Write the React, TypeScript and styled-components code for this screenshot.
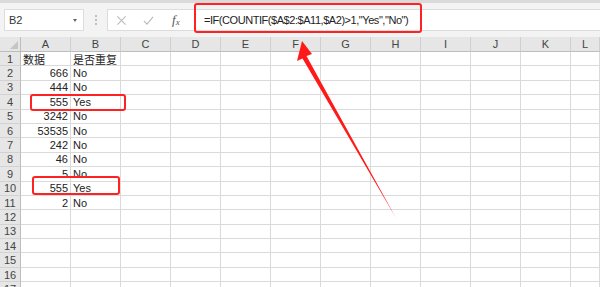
import styled, { createGlobalStyle } from 'styled-components';

const GlobalStyle = createGlobalStyle`
  html, body {
    margin: 0;
    padding: 0;
    background: #ffffff;
    overflow: hidden;
  }
  body {
    font-family: 'Liberation Sans', 'Noto Sans CJK SC', sans-serif;
  }
`;

const COLS = ['A', 'B', 'C', 'D', 'E', 'F', 'G', 'H', 'I', 'J', 'K', 'L'];
const ROW_COUNT = 17;

const data: { value: string; dup: string }[] = [
  { value: '数据', dup: '是否重复' },
  { value: '666', dup: 'No' },
  { value: '444', dup: 'No' },
  { value: '555', dup: 'Yes' },
  { value: '3242', dup: 'No' },
  { value: '53535', dup: 'No' },
  { value: '242', dup: 'No' },
  { value: '46', dup: 'No' },
  { value: '5', dup: 'No' },
  { value: '555', dup: 'Yes' },
  { value: '2', dup: 'No' },
];

export default function App() {
  return (
    <Screen>
      <GlobalStyle />
      <TopStrip />
      <FormulaBar>
        <NameBox>
          <span>B2</span>
          <Caret />
        </NameBox>
        <Grip>
          <i />
          <i />
          <i />
        </Grip>
        <FormulaInput>
          <Tools>
            <ToolIcon viewBox="0 0 12 12">
              <path d="M1.5 1.5 L10.5 10.5 M10.5 1.5 L1.5 10.5" stroke="#b8b8b8" strokeWidth="1.1" fill="none" />
            </ToolIcon>
            <ToolIcon viewBox="0 0 12 12">
              <path d="M1 6.5 L4.3 10 L11 2" stroke="#b8b8b8" strokeWidth="1.2" fill="none" />
            </ToolIcon>
            <Fx>
              f<sub>x</sub>
            </Fx>
          </Tools>
          <FormulaText>=IF(COUNTIF($A$2:$A11,$A2)&gt;1,"Yes","No")</FormulaText>
        </FormulaInput>
      </FormulaBar>
      <Sheet>
        <Corner>
          <CornerTriangle />
        </Corner>
        {COLS.map((c) => (
          <ColHeader key={c}>{c}</ColHeader>
        ))}
        {Array.from({ length: ROW_COUNT }).map((_, r) => {
          const row = data[r];
          return [
            <RowHeader key={`h${r}`}>{r + 1}</RowHeader>,
            ...COLS.map((c, ci) => {
              let content = '';
              let align: 'left' | 'right' = 'left';
              if (row && ci === 0) {
                content = row.value;
                align = r === 0 ? 'left' : 'right';
              }
              if (row && ci === 1) content = row.dup;
              return (
                <Cell key={`${r}-${c}`} $align={align}>
                  {content}
                </Cell>
              );
            }),
          ];
        })}
      </Sheet>

      <Highlight $x={194} $y={3} $w={228} $h={30} />
      <Highlight $x={30} $y={94} $w={96} $h={17} />
      <Highlight $x={32} $y={176} $w={88} $h={19} />

      <Arrow width="600" height="287" viewBox="0 0 600 287">
        <polygon points="302,41 297,61 302.5,58.5 396,218 306.5,56 312,54" fill="#ff1a1a" />
      </Arrow>
    </Screen>
  );
}

const Screen = styled.div`
  position: relative;
  width: 600px;
  height: 287px;
  overflow: hidden;
  background: #ffffff;
`;

const TopStrip = styled.div`
  height: 3px;
  background: #dadada;
`;

const FormulaBar = styled.div`
  height: 34px;
  background: #f3f3f3;
  display: flex;
  align-items: center;
  padding-left: 4px;
  box-sizing: border-box;
`;

const NameBox = styled.div`
  width: 80px;
  height: 22px;
  background: #ffffff;
  border: 1px solid #dcdcdc;
  box-sizing: border-box;
  display: flex;
  align-items: center;
  justify-content: space-between;
  padding: 0 6px 0 4px;
  font-size: 11px;
  color: #333;
`;

const Caret = styled.div`
  width: 0;
  height: 0;
  border-left: 2.5px solid transparent;
  border-right: 2.5px solid transparent;
  border-top: 3px solid #666;
`;

const Grip = styled.div`
  width: 23px;
  display: flex;
  flex-direction: column;
  align-items: center;
  gap: 2px;

  i {
    display: block;
    width: 2px;
    height: 2px;
    background: #bdbdbd;
  }
`;

const FormulaInput = styled.div`
  flex: 1;
  height: 22px;
  background: #ffffff;
  border: 1px solid #dcdcdc;
  border-right: none;
  box-sizing: border-box;
  display: flex;
  align-items: center;
`;

const Tools = styled.div`
  width: 88px;
  display: flex;
  align-items: center;
  padding-left: 8px;
  gap: 16px;
`;

const ToolIcon = styled.svg`
  width: 11px;
  height: 11px;
`;

const Fx = styled.span`
  font-family: 'Liberation Serif', serif;
  font-style: italic;
  font-size: 13px;
  color: #555;
  margin-left: 2px;

  sub {
    font-size: 9px;
    vertical-align: -1px;
  }
`;

const FormulaText = styled.div`
  font-size: 11px;
  color: #222;
  letter-spacing: -0.45px;
  white-space: nowrap;
`;

const Sheet = styled.div`
  display: grid;
  grid-template-columns: 21px repeat(11, 50px) 1fr;
  grid-template-rows: 15px repeat(17, 14.4px);
  background: #ffffff;
`;

const ColHeader = styled.div`
  background: #e6e6e6;
  border-right: 1px solid #cfcfcf;
  border-bottom: 1px solid #bdbdbd;
  box-sizing: border-box;
  display: flex;
  align-items: center;
  justify-content: center;
  font-size: 11px;
  color: #444;
`;

const Corner = styled(ColHeader)`
  position: relative;
  border-right: 1px solid #bdbdbd;
`;

const CornerTriangle = styled.div`
  position: absolute;
  right: 2px;
  bottom: 2px;
  width: 0;
  height: 0;
  border-left: 8px solid transparent;
  border-bottom: 8px solid #c4c4c4;
`;

const RowHeader = styled.div`
  background: #e6e6e6;
  border-right: 1px solid #bdbdbd;
  border-bottom: 1px solid #d2d2d2;
  box-sizing: border-box;
  display: flex;
  align-items: center;
  justify-content: center;
  font-size: 11px;
  color: #444;
`;

const Cell = styled.div<{ $align: 'left' | 'right' }>`
  border-right: 1px solid #dadada;
  border-bottom: 1px solid #dadada;
  box-sizing: border-box;
  display: flex;
  align-items: center;
  justify-content: ${(p) => (p.$align === 'right' ? 'flex-end' : 'flex-start')};
  padding: 0 2px;
  font-size: 11px;
  color: #222;
  white-space: nowrap;
  overflow: visible;
`;

const Highlight = styled.div<{ $x: number; $y: number; $w: number; $h: number }>`
  position: absolute;
  left: ${(p) => p.$x}px;
  top: ${(p) => p.$y}px;
  width: ${(p) => p.$w}px;
  height: ${(p) => p.$h}px;
  border: 2px solid #f22;
  border-radius: 3px;
  box-sizing: border-box;
  pointer-events: none;
`;

const Arrow = styled.svg`
  position: absolute;
  left: 0;
  top: 0;
  pointer-events: none;
`;
